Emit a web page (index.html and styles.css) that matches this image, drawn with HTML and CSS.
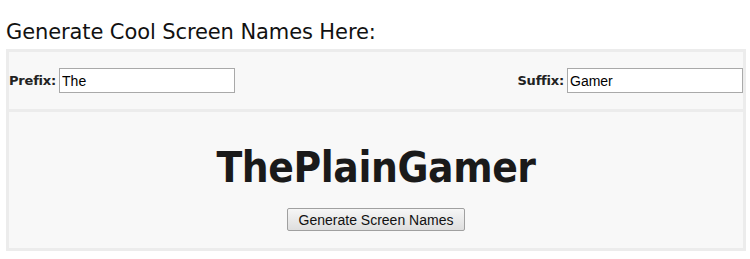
FILE: index.html
```html
<!DOCTYPE html>
<html>
<head>
<meta charset="utf-8">
<link rel="stylesheet" href="styles.css">
</head>
<body>
<h1 class="title">Generate Cool Screen Names Here:</h1>
<div class="panel">
  <div class="inputs">
    <label class="field"><span class="lbl">Prefix:</span><input class="txt" type="text" value="The"></label>
    <label class="field"><span class="lbl">Suffix:</span><input class="txt" type="text" value="Gamer"></label>
  </div>
  <div class="result">
    <div class="name">ThePlainGamer</div>
    <button class="btn" type="button">Generate Screen Names</button>
  </div>
</div>
</body>
</html>
```
FILE: styles.css
```css
html, body { background: #fff; }
body {
  margin: 0;
  padding: 18px 4px 0 6px;
  font-family: "DejaVu Sans", Verdana, sans-serif;
  color: #1a1a1a;
}
.title {
  margin: 0 0 3px 0;
  font-weight: normal;
  font-size: 21px;
  line-height: 28px;
  letter-spacing: -0.1px;
  color: #111;
}
.panel {
  width: 734px;
  border: 3px solid #ececec;
  background: #f8f8f8;
}
.inputs {
  height: 57px;
  display: flex;
  justify-content: space-between;
  align-items: center;
  border-bottom: 3px solid #ececec;
}
.field { display: flex; align-items: center; gap: 3px; }
.lbl {
  font-family: "DejaVu Sans", Verdana, sans-serif;
  font-weight: bold;
  font-size: 13px;
  letter-spacing: -0.2px;
  color: #222;
}
.txt {
  box-sizing: border-box;
  width: 176px;
  height: 25px;
  margin: 0;
  padding: 1px 2px;
  border: 1px solid #a9a9a9;
  background: #fff;
  font-family: "Liberation Sans", Arial, sans-serif;
  font-size: 14px;
  color: #000;
}
.result {
  height: 136px;
  display: flex;
  flex-direction: column;
  align-items: center;
}
.name {
  margin-top: 31px;
  font-family: "DejaVu Sans", Verdana, sans-serif;
  font-stretch: condensed;
  font-weight: bold;
  font-size: 42px;
  line-height: 50px;
  letter-spacing: -0.4px;
  color: #1a1a1a;
}
.btn {
  margin-top: 15px;
  box-sizing: border-box;
  width: 178px;
  height: 23px;
  padding: 0 6px;
  border: 1px solid #a0a0a0;
  border-radius: 2px;
  background: linear-gradient(#f6f6f6, #dedede);
  font-family: "Liberation Sans", Arial, sans-serif;
  font-size: 14px;
  color: #111;
}
```
